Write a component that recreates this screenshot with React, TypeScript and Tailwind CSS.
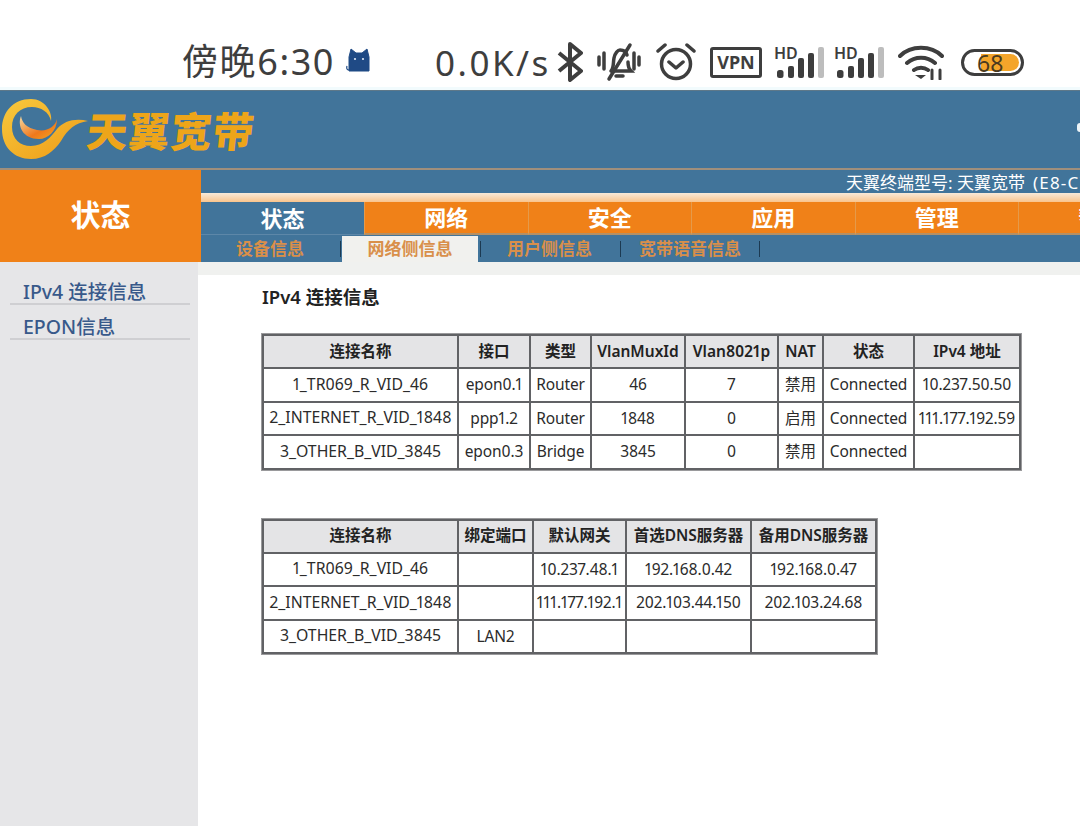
import React from "react";

const font = { fontFamily: '"Noto Sans","Noto Sans CJK SC",sans-serif' };

const t1Cols = [195, 72, 61, 94, 93, 45, 91, 106];
const t1Head = ["连接名称", "接口", "类型", "VlanMuxId", "Vlan8021p", "NAT", "状态", "IPv4 地址"];
const t1Rows = [
  ["1_TR069_R_VID_46", "epon0.1", "Router", "46", "7", "禁用", "Connected", "10.237.50.50"],
  ["2_INTERNET_R_VID_1848", "ppp1.2", "Router", "1848", "0", "启用", "Connected", "111.177.192.59"],
  ["3_OTHER_B_VID_3845", "epon0.3", "Bridge", "3845", "0", "禁用", "Connected", ""],
];
const t2Cols = [195, 75, 93, 125, 125];
const t2Head = ["连接名称", "绑定端口", "默认网关", "首选DNS服务器", "备用DNS服务器"];
const t2Rows = [
  ["1_TR069_R_VID_46", "", "10.237.48.1", "192.168.0.42", "192.168.0.47"],
  ["2_INTERNET_R_VID_1848", "", "111.177.192.1", "202.103.44.150", "202.103.24.68"],
  ["3_OTHER_B_VID_3845", "LAN2", "", "", ""],
];

function DataTable({ cols, head, rows, width }: { cols: number[]; head: string[]; rows: string[][]; width: number }) {
  return (
    <table className="ml-[1px] table-fixed border-collapse outline outline-1 outline-[#9a9a9c] proportional-nums" style={{ width }}>
      <colgroup>
        {cols.map((c, i) => (
          <col key={i} style={{ width: c }} />
        ))}
      </colgroup>
      <thead>
        <tr className="h-[33px] bg-[#e4e4e6]">
          {head.map((h, i) => (
            <th key={i} className="border-2 border-[#616265] p-0 text-center text-[15.5px] font-semibold text-[#222] whitespace-nowrap">
              {h}
            </th>
          ))}
        </tr>
      </thead>
      <tbody>
        {rows.map((r, i) => (
          <tr key={i} className="h-[33.5px] bg-white">
            {r.map((c, j) => (
              <td
                key={j}
                className={
                  j === 0
                    ? "border-2 border-[#616265] p-0 text-center text-[15.8px] text-[#2b2b2b] whitespace-nowrap"
                    : "border-2 border-[#616265] p-0 text-center text-[15.5px] tracking-[-0.1px] text-[#2b2b2b] whitespace-nowrap"
                }
              >
                {c}
              </td>
            ))}
          </tr>
        ))}
      </tbody>
    </table>
  );
}

function Signal() {
  return (
    <svg width="52" height="33" viewBox="0 0 52 33" className="shrink-0 overflow-visible">
      <text x="0" y="13" fontSize="16" fontWeight="600" fill="#3d3d3d" fontFamily="Noto Sans">HD</text>
      <rect x="3" y="24" width="6.5" height="8" rx="2.5" fill="#3d3d3d" />
      <rect x="14" y="20" width="6" height="12" rx="2" fill="#3d3d3d" />
      <rect x="24" y="12" width="6" height="20" rx="2" fill="#3d3d3d" />
      <rect x="34" y="7" width="6" height="25" rx="2" fill="#3d3d3d" />
      <rect x="44" y="1" width="6" height="31" rx="2" fill="#bdbdbd" />
    </svg>
  );
}

function StatusBar() {
  return (
    <div className="flex h-[90px] items-center border-b-[3px] border-[#f2fbfd] bg-white pl-[182px] pt-[37px] text-[#3e3e3e] overflow-hidden">
      <span className="w-[151px] shrink-0 text-[36px] leading-none tracking-[1.6px] whitespace-nowrap">傍晚6:30</span>
      <svg width="26" height="26" viewBox="0 0 26 26" className="ml-[13px] shrink-0 -mt-[4px]">
        <path d="M3 23 Q0 23 1 19" fill="none" stroke="#1f4a85" strokeWidth="1.2" />
        <path d="M3 24V10L5 2l5 4h6l5-4 2 8v14z" fill="#1f4a85" stroke="#1f4a85" strokeWidth="1" />
        <circle cx="9" cy="12" r="1.1" fill="#dfe9f7" />
        <circle cx="17" cy="12" r="1.1" fill="#dfe9f7" />
      </svg>
      <span className="ml-[63px] w-[116px] shrink-0 text-[35px] leading-none tracking-[2.5px] whitespace-nowrap">0.0K/s</span>
      <svg width="26" height="40" viewBox="0 0 26 40" className="ml-[6px] shrink-0" fill="none" stroke="#3e3e3e" strokeWidth="4" strokeLinejoin="round">
        <path d="M2 11 L24 29 L13 38 V2 L24 11 L2 29" />
      </svg>
      <svg width="44" height="40" viewBox="0 0 44 40" className="ml-[14px] shrink-0" fill="none" stroke="#3e3e3e" strokeWidth="3.5" strokeLinecap="round">
        <path d="M2 15v8M7 11v16M37 11v16M42 15v8" />
        <path d="M14 29c3-3 2-8 3-13 1-5 4-8 6-8 3 0 6 1 7 5M31 20c0 4 1 7 3 9H15M19 34h7" />
        <path d="M12 37 33 3" />
      </svg>
      <svg width="40" height="40" viewBox="0 0 40 40" className="ml-[15px] shrink-0" fill="none" stroke="#3e3e3e" strokeWidth="3.5" strokeLinecap="round" strokeLinejoin="round">
        <circle cx="20" cy="22" r="14.5" />
        <path d="M13 20l7 6 7-6M2 9l7-6M38 9l-7-6" />
      </svg>
      <div className="ml-[14px] flex h-[31px] w-[52px] shrink-0 items-center justify-center rounded-[3px] border-[3.5px] border-[#3e3e3e] text-[18px] font-bold leading-none">
        VPN
      </div>
      <div className="ml-[12px] shrink-0"><Signal /></div>
      <div className="ml-[8px] shrink-0"><Signal /></div>
      <svg width="46" height="36" viewBox="0 0 46 36" className="ml-[12px] shrink-0" fill="none" stroke="#3e3e3e" strokeWidth="4" strokeLinecap="round">
        <path d="M2 12C13 1 33 1 44 12M9 19c8-7 20-7 28 0M16 26c4-3 10-3 14 0" />
        <path d="M17 31l6 4 5-4z" fill="#3e3e3e" stroke="none" />
        <path d="M34 26v9M42 26v9" strokeWidth="3" />
      </svg>
      <div className="relative ml-[17px] flex h-[27px] w-[63px] shrink-0 items-center rounded-full border-[3px] border-[#3e3e3e] p-[2px]">
        <div className="ml-[15px] h-full w-[39px] rounded-r-full bg-[#f4a52a]" />
        <span className="absolute left-[13px] top-[-2px] text-[23px] leading-[26px] text-[#4b3a1f]">68</span>
      </div>
    </div>
  );
}

function Logo() {
  return (
    <div className="flex items-center pl-[1px]">
      <svg width="88" height="62" viewBox="0 0 88 62" className="shrink-0">
        <defs>
          <linearGradient id="lg" x1="0" y1="0" x2="1" y2="1">
            <stop offset="0" stopColor="#f7c93e" />
            <stop offset="1" stopColor="#ee9a16" />
          </linearGradient>
          <linearGradient id="li" x1="0" y1="0" x2="1" y2="1">
            <stop offset="0" stopColor="#f6d9a0" />
            <stop offset="0.6" stopColor="#f0781c" />
            <stop offset="1" stopColor="#f5a81e" />
          </linearGradient>
        </defs>
        <path d="M30 0C12 0 1 13 1 30C1 48 13 60 30 60C44 60 53 52 60 42C67 30 74 24 87 22C74 19 63 22 56 30C50 38 42 47 30 47C19 47 11 40 11 28C11 16 19 8 31 8C40 8 48 13 50 22C52 14 44 0 30 0Z" fill="url(#lg)" />
        <path d="M20 17C16 27 22 40 38 40C47 40 56 32 56 20C54 28 46 33 36 31C26 29 21 24 20 17Z" fill="url(#li)" />
      </svg>
      <span className="ml-[-2px] mt-[3px] -skew-x-6 text-[41px] font-black leading-none tracking-[1px] text-[#eda51a]">天翼宽带</span>
    </div>
  );
}

export default function App() {
  const tabs = ["网络", "安全", "应用", "管理", "帮助"];
  return (
    <div className="h-[826px] w-[1080px] overflow-hidden bg-white" style={font}>
      <StatusBar />
      <div className="flex h-[78px] items-center justify-between border-t border-[#5e7889] bg-[#41749a]">
        <Logo />
        <div className="mt-[-4px] h-[9px] w-[3px] rounded-l-sm bg-[#eef5f8]" />
      </div>
      <div className="h-[2px] bg-[#a08f7c]" />
      <div className="flex h-[92px]">
        <div className="flex w-[201px] shrink-0 items-center justify-center bg-[#f08118] pb-[4px] text-[30px] font-bold text-white">
          状态
        </div>
        <div className="min-w-0 flex-1 overflow-hidden bg-[#41749a]">
          <div className="flex h-[23px] items-center pl-[645px] pt-[2px] text-[17px] leading-none text-white whitespace-nowrap">
            天翼终端型号: 天翼宽带<span className="ml-[8px] tracking-[1.2px]">(E8-C)</span>
          </div>
          <div className="h-[9px] bg-gradient-to-b from-[#f8ead9] to-[#f9c48c]" />
          <div className="flex h-[34px] w-[1000px] pb-[1px] text-[22px] font-bold text-white">
            <div className="flex w-[163px] shrink-0 items-center justify-center border-b border-[#5d87a8] bg-[#41749a]">状态</div>
            {tabs.map((t) => (
              <div key={t} className="flex w-[163.5px] shrink-0 items-center justify-center border-l border-[#e59a4a] border-b-2 border-b-[#b39066] bg-[#f08118]">
                {t}
              </div>
            ))}
          </div>
          <div className="flex h-[26px] items-center text-[17px] font-semibold text-[#d98f4a] whitespace-nowrap">
            <span className="ml-[35px]">设备信息</span>
            <span className="ml-[36px] h-[16px] w-px bg-[#1c3a52]" />
            <span className="ml-[1px] flex h-full w-[136px] items-center justify-center bg-[#f1f1ee]">网络侧信息</span>
            <span className="ml-[2px] h-[16px] w-px bg-[#1c3a52]" />
            <span className="ml-[26px]">用户侧信息</span>
            <span className="ml-[28px] h-[16px] w-px bg-[#1c3a52]" />
            <span className="ml-[18px]">宽带语音信息</span>
            <span className="ml-[18px] h-[16px] w-px bg-[#1c3a52]" />
          </div>
        </div>
      </div>
      <div className="flex h-[564px]">
        <div className="w-[198px] shrink-0 bg-[#e6e6e8] pt-[15px] pl-[10px] pr-[8px] text-[19.5px] font-medium text-[#38598a]">
          <div className="flex h-[28px] items-center border-b-2 border-[#cfcfd2] pl-[13px] pt-[4px] leading-none whitespace-nowrap">IPv4 连接信息</div>
          <div className="mt-[6px] flex h-[29px] items-center border-b-2 border-[#cfcfd2] pl-[13px] pt-[4px] leading-none whitespace-nowrap">EPON信息</div>
        </div>
        <div className="min-w-0 flex-1">
          <div className="h-[13px] bg-[#f0f1ef]" />
          <div className="pl-[63px]">
            <div className="ml-[1px] mt-[10px] text-[18.5px] font-semibold leading-[24px] text-[#222]">IPv4 连接信息</div>
            <div className="mt-[25px]">
              <DataTable cols={t1Cols} head={t1Head} rows={t1Rows} width={757} />
            </div>
            <div className="mt-[49px]">
              <DataTable cols={t2Cols} head={t2Head} rows={t2Rows} width={613} />
            </div>
          </div>
        </div>
      </div>
    </div>
  );
}
